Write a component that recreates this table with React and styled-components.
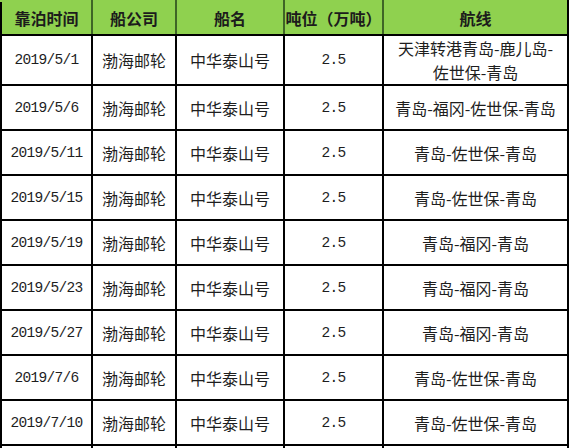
import styled, { createGlobalStyle } from "styled-components";

const GlobalStyle = createGlobalStyle`
  html, body {
    margin: 0;
    padding: 0;
    background: #fff;
  }
  body {
    font-family: "Noto Sans CJK SC", "DejaVu Sans", sans-serif;
    color: #1a1a1a;
  }
`;

const Table = styled.table`
  border-collapse: collapse;
  table-layout: fixed;
  width: 569px;
`;

const HeadCell = styled.th`
  height: 32px;
  padding: 0;
  background: #8fd14f;
  border: 2px solid #000;
  border-left-color: #3f6526;
  border-right-color: #3f6526;
  border-top-color: #8fd14f;
  font-size: 16px;
  font-weight: 700;
  color: #1c1c1c;
  text-align: center;
  vertical-align: middle;
  line-height: 20px;
  &:first-child {
    border-left-color: #000;
  }
  &:last-child {
    border-right-color: #000;
  }
`;

const Cell = styled.td`
  height: ${(p) => (p.$tall ? 47 : 43)}px;
  padding: 0;
  border: 2px solid #000;
  text-align: center;
  vertical-align: middle;
  font-family: ${(p) =>
    p.$mono
      ? '"Liberation Mono", "DejaVu Sans Mono", monospace'
      : '"Noto Sans CJK SC", sans-serif'};
  font-size: ${(p) => (p.$mono ? "14.5px" : "16px")};
  letter-spacing: ${(p) => (p.$mono ? "-0.7px" : "0")};
  font-weight: 400;
  line-height: 24px;
  color: #1e1e1e;
`;

const Route = styled.span`
  display: inline-block;
  font-family: "Noto Sans CJK SC", sans-serif;
`;

const cols = [91, 84, 108, 99, 185];
const heads = ["靠泊时间", "船公司", "船名", "吨位（万吨）", "航线"];

const rows = [
  ["2019/5/1", ["天津转港青岛-鹿儿岛-", "佐世保-青岛"]],
  ["2019/5/6", ["青岛-福冈-佐世保-青岛"]],
  ["2019/5/11", ["青岛-佐世保-青岛"]],
  ["2019/5/15", ["青岛-佐世保-青岛"]],
  ["2019/5/19", ["青岛-福冈-青岛"]],
  ["2019/5/23", ["青岛-福冈-青岛"]],
  ["2019/5/27", ["青岛-福冈-青岛"]],
  ["2019/7/6", ["青岛-佐世保-青岛"]],
  ["2019/7/10", ["青岛-佐世保-青岛"]],
];

export default function App() {
  return (
    <>
      <GlobalStyle />
      <Table>
        <colgroup>
          {cols.map((w, i) => (
            <col key={i} style={{ width: w }} />
          ))}
        </colgroup>
        <thead>
          <tr>
            {heads.map((h) => (
              <HeadCell key={h}>{h}</HeadCell>
            ))}
          </tr>
        </thead>
        <tbody>
          {rows.map(([date, route], i) => (
            <tr key={date}>
              <Cell $mono $tall={i === 0}>{date}</Cell>
              <Cell $tall={i === 0}>渤海邮轮</Cell>
              <Cell $tall={i === 0}>中华泰山号</Cell>
              <Cell $mono $tall={i === 0}>2.5</Cell>
              <Cell $tall={i === 0}>
                {route.map((line) => (
                  <Route key={line}>{line}</Route>
                ))}
              </Cell>
            </tr>
          ))}
          <tr>
            {cols.map((w, i) => (
              <Cell key={i} />
            ))}
          </tr>
        </tbody>
      </Table>
    </>
  );
}
